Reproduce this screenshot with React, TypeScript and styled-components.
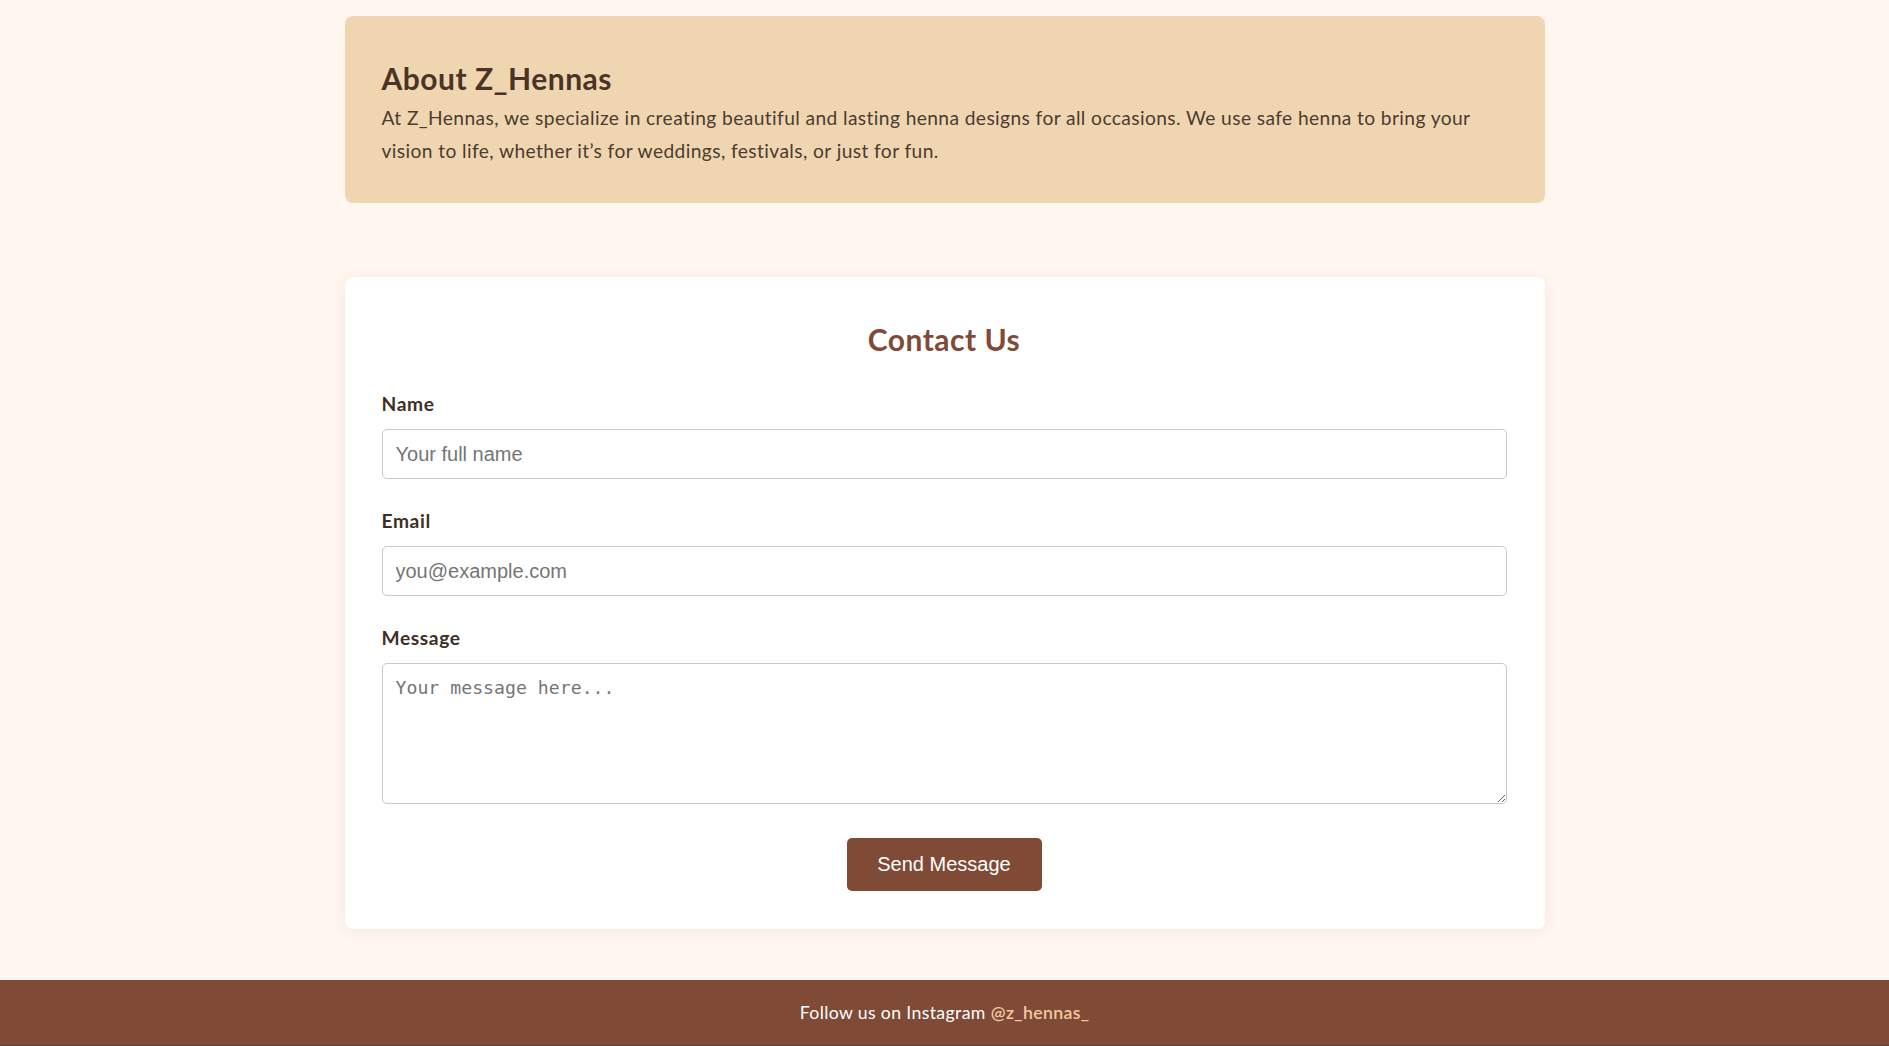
import React from 'react';
import styled, { createGlobalStyle } from 'styled-components';

const GlobalStyle = createGlobalStyle`
  html, body {
    margin: 0;
    padding: 0;
    background: #fff6f0;
  }

  body {
    font-family: Lato, "Noto Sans", sans-serif;
    color: #4b3b30;
    letter-spacing: 0.4px;
  }

  * {
    box-sizing: border-box;
  }
`;

const Page = styled.div`
  display: flex;
  flex-direction: column;
  min-height: 100vh;
`;

const Main = styled.main`
  flex: 1;
  width: 1200px;
  margin: 0 auto;
  padding-top: 16px;
  padding-bottom: 50px;
  display: flex;
  flex-direction: column;
  gap: 74px;
`;

const Card = styled.section<{ $tone?: 'sand' | 'white' }>`
  background: ${({ $tone }) => ($tone === 'sand' ? '#f0d6b0' : '#ffffff')};
  border-radius: 8px;
  padding: ${({ $tone }) => ($tone === 'sand' ? '36px 37px 36px 37px' : '36px 38px 38px 37px')};
  box-shadow: ${({ $tone }) => ($tone === 'sand' ? 'none' : '0 2px 14px rgba(120, 70, 40, 0.08)')};
`;

const Heading = styled.h2<{ $center?: boolean }>`
  margin: 8px 0 ${({ $center }) => ($center ? '35px' : '6px')};
  font-size: 30px;
  line-height: 36px;
  font-weight: 700;
  letter-spacing: 0.5px;
  color: ${({ $center }) => ($center ? '#7f4a36' : '#4a3426')};
  text-align: ${({ $center }) => ($center ? 'center' : 'left')};
`;

const Paragraph = styled.p`
  margin: 0;
  font-size: 19.2px;
  line-height: 32.6px;
  color: #4b3b30;
`;

const Form = styled.form`
  display: flex;
  flex-direction: column;
`;

const Field = styled.div<{ $last?: boolean }>`
  display: flex;
  flex-direction: column;
  margin-bottom: ${({ $last }) => ($last ? '0' : '30.2px')};
`;

const Label = styled.label`
  font-size: 19.2px;
  line-height: 23px;
  font-weight: 700;
  letter-spacing: 0.6px;
  color: #3f2f24;
  margin-bottom: 14.2px;
`;

const Input = styled.input`
  width: 100%;
  height: 49.5px;
  padding: 0 13px;
  border: 1px solid #c9c9c9;
  border-radius: 5px;
  background: #fff;
  font-family: "Liberation Sans", Arial, sans-serif;
  font-size: 20px;
  letter-spacing: 0;
  color: #333;
  outline: none;

  &::placeholder {
    color: #757575;
  }
`;

const TextArea = styled.textarea`
  display: block;
  width: 100%;
  height: 141px;
  padding: 12.7px 13px;
  border: 1px solid #c9c9c9;
  border-radius: 5px;
  background: #fff;
  font-family: "DejaVu Sans Mono", "Liberation Mono", monospace;
  font-size: 18.2px;
  letter-spacing: 0;
  color: #333;
  outline: none;

  &::placeholder {
    color: #757575;
  }
`;

const Actions = styled.div`
  display: flex;
  justify-content: center;
  margin-top: 34px;
`;

const SendButton = styled.button`
  width: 195px;
  height: 53px;
  border: none;
  border-radius: 5px;
  background: #7f4a36;
  color: #ffffff;
  font-family: "Liberation Sans", Arial, sans-serif;
  font-size: 20px;
  letter-spacing: 0;
  cursor: pointer;
`;

const Footer = styled.footer`
  height: 66px;
  background: #7f4a36;
  display: flex;
  align-items: center;
  justify-content: center;
  font-size: 17.7px;
  letter-spacing: 0.35px;
  color: #ffffff;
  border-bottom: 1px solid #4a4a4a;
`;

const Handle = styled.a`
  margin-left: 5px;
  color: #f4c7a1;
  font-weight: 600;
  text-decoration: none;
`;

export default function App() {
  return (
    <>
      <GlobalStyle />
      <Page>
        <Main>
          <Card $tone="sand">
            <Heading>About Z_Hennas</Heading>
            <Paragraph>
              At Z_Hennas, we specialize in creating beautiful and lasting henna designs for all
              occasions. We use safe henna to bring your vision to life, whether it’s for weddings,
              festivals, or just for fun.
            </Paragraph>
          </Card>

          <Card $tone="white">
            <Heading $center>Contact Us</Heading>
            <Form onSubmit={(e) => e.preventDefault()}>
              <Field>
                <Label htmlFor="name">Name</Label>
                <Input id="name" type="text" placeholder="Your full name" />
              </Field>
              <Field>
                <Label htmlFor="email">Email</Label>
                <Input id="email" type="email" placeholder="you@example.com" />
              </Field>
              <Field $last>
                <Label htmlFor="message">Message</Label>
                <TextArea id="message" placeholder="Your message here..." />
              </Field>
              <Actions>
                <SendButton type="submit">Send Message</SendButton>
              </Actions>
            </Form>
          </Card>
        </Main>

        <Footer>
          Follow us on Instagram<Handle href="#">@z_hennas_</Handle>
        </Footer>
      </Page>
    </>
  );
}
